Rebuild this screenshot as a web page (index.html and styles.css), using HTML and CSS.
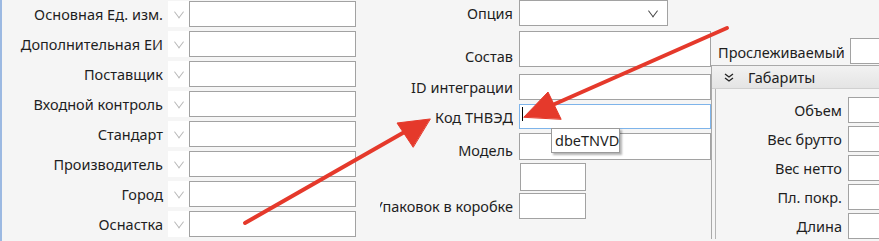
FILE: index.html
```html
<!DOCTYPE html>
<html lang="ru">
<head>
  <meta charset="UTF-8">
  <title>Карточка номенклатуры</title>
  <link rel="stylesheet" href="styles.css">
</head>
<body>

<div class="form">

  <div class="col-left">
    <div class="row">
      <div class="label">Основная Ед. изм.</div>
      <div class="drop"><span class="chev"></span></div>
      <div class="field"></div>
    </div>
    <div class="row">
      <div class="label">Дополнительная ЕИ</div>
      <div class="drop"><span class="chev"></span></div>
      <div class="field"></div>
    </div>
    <div class="row">
      <div class="label">Поставщик</div>
      <div class="drop"><span class="chev"></span></div>
      <div class="field"></div>
    </div>
    <div class="row">
      <div class="label">Входной контроль</div>
      <div class="drop"><span class="chev"></span></div>
      <div class="field"></div>
    </div>
    <div class="row">
      <div class="label">Стандарт</div>
      <div class="drop"><span class="chev"></span></div>
      <div class="field"></div>
    </div>
    <div class="row">
      <div class="label">Производитель</div>
      <div class="drop"><span class="chev"></span></div>
      <div class="field"></div>
    </div>
    <div class="row">
      <div class="label">Город</div>
      <div class="drop"><span class="chev"></span></div>
      <div class="field"></div>
    </div>
    <div class="row">
      <div class="label">Оснастка</div>
      <div class="drop"><span class="chev"></span></div>
      <div class="field"></div>
    </div>
  </div>

  <div class="col-mid">
    <div class="mrow r-option">
      <div class="mlabel">Опция</div>
      <div class="field combo"><span class="chev dark"></span></div>
    </div>
    <div class="mrow r-sostav">
      <div class="mlabel">Состав</div>
      <div class="field wide"></div>
    </div>
    <div class="mrow r-id">
      <div class="mlabel">ID интеграции</div>
      <div class="field wide"></div>
    </div>
    <div class="mrow r-code">
      <div class="mlabel">Код ТНВЭД</div>
      <div class="field wide focused"><span class="caret"></span></div>
    </div>
    <div class="mrow r-model">
      <div class="mlabel">Модель</div>
      <div class="field wide"></div>
    </div>
    <div class="mrow r-empty">
      <div class="mlabel"></div>
      <div class="field small"></div>
    </div>
    <div class="mrow r-pack">
      <div class="mlabel"><span>Упаковок в коробке</span></div>
      <div class="field small"></div>
    </div>
  </div>

  <div class="col-right">
    <div class="trace">
      <div class="tlabel">Прослеживаемый</div>
      <div class="field tbox"></div>
    </div>
    <div class="panel">
      <div class="panel-head">
        <svg class="dbl" width="10" height="9" viewBox="0 0 10 9">
          <path d="M1 1 L5 4 L9 1 M1 5 L5 8 L9 5" fill="none" stroke="#222" stroke-width="1.3"/>
        </svg>
        <span>Габариты</span>
      </div>
      <div class="panel-body">
        <div class="prow"><div class="plabel">Объем</div><div class="field pbox"></div></div>
        <div class="prow"><div class="plabel">Вес брутто</div><div class="field pbox"></div></div>
        <div class="prow"><div class="plabel">Вес нетто</div><div class="field pbox"></div></div>
        <div class="prow"><div class="plabel">Пл. покр.</div><div class="field pbox"></div></div>
        <div class="prow"><div class="plabel">Длина</div><div class="field pbox"></div></div>
      </div>
    </div>
  </div>

</div>

<div class="tooltip">dbeTNVD</div>

<svg class="arrows" width="879" height="241" viewBox="0 0 879 241">
  <g stroke="#e5392b" stroke-width="4" stroke-linecap="round" fill="#e5392b">
    <line x1="727" y1="28" x2="548" y2="107"/>
    <polygon points="524,117 548,92 561,119" stroke-width="1" stroke-linejoin="round"/>
    <line x1="245" y1="223" x2="408" y2="130"/>
    <polygon points="430,119 397,123 413,147" stroke-width="1" stroke-linejoin="round"/>
  </g>
</svg>

</body>
</html>
```

FILE: styles.css
```css
body {
  margin: 0;
  width: 879px;
  height: 241px;
  overflow: hidden;
  position: relative;
  background-color: #f5f5f5;
  font-family: "Noto Sans", "Open Sans", sans-serif;
  font-size: 14.5px;
  color: #1e1e1e;
}
.form {
  display: flex;
  border-left: 2px solid #9cb9e2;
  height: 241px;
}
.field {
  background-color: #fff;
  border: 1px solid #a2a2a2;
  box-sizing: border-box;
}

/* left column */
.col-left {
  width: 354px;
  padding-top: 1px;
  display: flex;
  flex-direction: column;
  gap: 4px;
}
.row {
  display: flex;
  height: 26px;
}
.label {
  width: 161px;
  margin-right: 5px;
  text-align: right;
  line-height: 27px;
  white-space: nowrap;
}
.drop {
  width: 21px;
  background-color: #fff;
  display: flex;
  align-items: center;
  justify-content: center;
}
.row .field {
  width: 167px;
}
.chev {
  width: 7px;
  height: 7px;
  border-right: 1px solid #b8b8b8;
  border-bottom: 1px solid #b8b8b8;
  transform: rotate(45deg) skew(8deg, 8deg);
  margin-top: -5px;
}
.chev.dark {
  border-color: #444;
}

/* middle column */
.col-mid {
  width: 363px;
  padding-left: 24px;
  box-sizing: border-box;
  display: flex;
  flex-direction: column;
}
.mrow {
  display: flex;
  align-items: center;
}
.mlabel {
  width: 133px;
  margin-right: 6px;
  display: flex;
  justify-content: flex-end;
  overflow: hidden;
  white-space: nowrap;
}
.mlabel span {
  flex-shrink: 0;
}
.r-option { height: 26px; }
.r-sostav { height: 36px; margin-top: 5px; align-items: flex-end; }
.r-sostav .mlabel { margin-bottom: 1px; }
.r-id { height: 26px; margin-top: 7px; }
.r-code { height: 25px; margin-top: 4px; }
.r-model { height: 27px; margin-top: 4px; }
.r-model .mlabel { margin-top: 7px; }
.r-empty { height: 28px; margin-top: 3px; }
.r-pack { height: 26px; margin-top: 2px; }
.mrow .field {
  height: 100%;
}
.combo {
  width: 149px;
  display: flex;
  align-items: center;
  justify-content: flex-end;
  padding-right: 10px;
}
.wide {
  width: 192px;
}
.small {
  width: 67px;
}
.r-empty .small {
  width: 66px;
  margin-left: 1px;
}
.focused {
  border-color: #7eb4ea;
  padding: 2px 0 0 2px;
}
.caret {
  display: block;
  width: 1px;
  height: 14px;
  background-color: #000;
}

/* right column */
.col-right {
  width: 200px;
  padding-top: 38px;
  box-sizing: border-box;
}
.trace {
  display: flex;
  align-items: center;
  height: 26px;
  margin-left: 7px;
}
.tlabel {
  width: 125px;
  text-align: right;
  margin-right: 7px;
  padding-top: 2px;
  white-space: nowrap;
}
.tbox {
  width: 40px;
  height: 26px;
}
.panel {
  margin-top: 1px;
  border-left: 1px solid #a9a9a9;
  border-top: 1px solid #a9a9a9;
}
.panel-head {
  height: 22px;
  display: flex;
  align-items: center;
  background: linear-gradient(#f2f2f2, #e4e4e4);
  border-bottom: 1px solid #d0d0d0;
}
.dbl {
  margin-left: 12px;
  margin-right: 14px;
}
.panel-body {
  margin-left: 3px;
  border-left: 1px solid #b4b4b4;
  padding-top: 8px;
  display: flex;
  flex-direction: column;
  gap: 3px;
}
.prow {
  display: flex;
  align-items: center;
  height: 26px;
}
.plabel {
  width: 126px;
  margin-right: 6px;
  text-align: right;
  white-space: nowrap;
}
.pbox {
  width: 40px;
  height: 26px;
}

/* overlays */
.tooltip {
  position: absolute;
  left: 551px;
  top: 128px;
  width: 69px;
  height: 25px;
  box-sizing: border-box;
  background-color: #fff;
  border: 1px solid #9a9a9a;
  box-shadow: 2px 2px 2px rgba(0, 0, 0, 0.3);
  padding-left: 3px;
  line-height: 22px;
}
.arrows {
  position: absolute;
  left: 0;
  top: 0;
}
```
